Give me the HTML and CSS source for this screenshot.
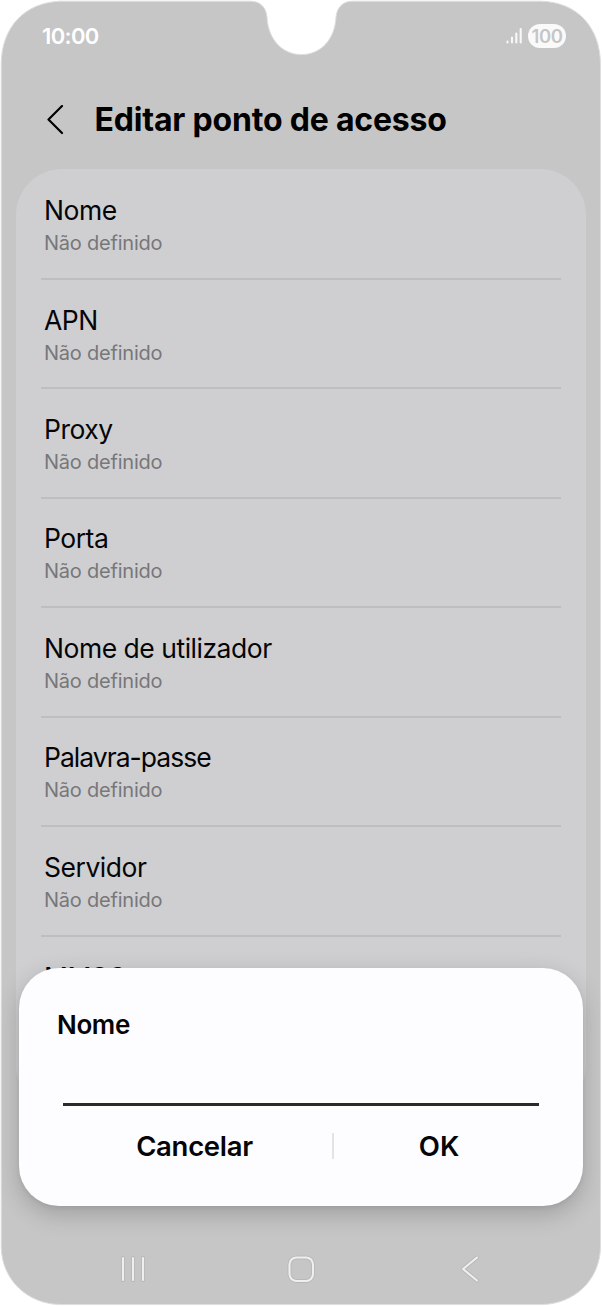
FILE: index.html
```html
<!DOCTYPE html>
<html lang="pt">
<head>
<meta charset="utf-8">
<title>Editar ponto de acesso</title>
<link rel="stylesheet" href="styles.css">
</head>
<body>
<main class="phone">
  <svg class="shell" viewBox="0 0 602 1306" aria-hidden="true">
    <path d="M61 1.2H250C260 1.2 266 7 267 17C268 39 282 54.6 301.500 54.600S335 39 336 17C337 7 343 1.200 353 1.200H541C577 2 600.500 27 600.500 65V1246C600.500 1280 574 1304.500 541 1304.500H61C28 1304.500 1.200 1280 1.200 1246V65C1.200 27 25 2 61 1.200Z"/>
  </svg>
  <header class="status">
    <span class="clock">10:00</span>
    <div class="indicators">
      <svg class="signal" width="18" height="18" viewBox="0 0 18 18" aria-hidden="true"><path d="M2.500 14.500V15.500M7 10.500V15.500M11.300 6.500V15.500M15.700 2V15.500"/></svg>
      <span class="battery">100</span>
    </div>
  </header>
  <div class="titlebar">
    <svg class="back" width="18" height="30" viewBox="0 0 18 30" aria-hidden="true"><path d="M15 1L1.500 14.500L15 28"/></svg>
    <h1 class="title">Editar ponto de acesso</h1>
  </div>
  <section class="list">
    <div class="row"><span class="name">Nome</span><span class="value">Não definido</span></div>
    <div class="row"><span class="name">APN</span><span class="value">Não definido</span></div>
    <div class="row"><span class="name">Proxy</span><span class="value">Não definido</span></div>
    <div class="row"><span class="name">Porta</span><span class="value">Não definido</span></div>
    <div class="row"><span class="name">Nome de utilizador</span><span class="value">Não definido</span></div>
    <div class="row"><span class="name tight">Palavra-passe</span><span class="value">Não definido</span></div>
    <div class="row"><span class="name">Servidor</span><span class="value">Não definido</span></div>
    <div class="row"><span class="name">MMSC</span></div>
  </section>
  <nav class="navbar">
    <svg width="30" height="30" viewBox="0 0 30 30" aria-hidden="true"><path class="halo" d="M5 4V26M15 4V26M25 4V26"/><path d="M5 4V26M15 4V26M25 4V26"/></svg>
    <svg width="30" height="30" viewBox="0 0 30 30" aria-hidden="true"><rect class="halo" x="3.500" y="3.500" width="23.500" height="23.500" rx="7"/><rect x="3.500" y="3.500" width="23.500" height="23.500" rx="7"/></svg>
    <svg width="30" height="30" viewBox="0 0 30 30" aria-hidden="true"><path class="halo" d="M23 3.500L9 15L23 26.500"/><path d="M23 3.500L9 15L23 26.500"/></svg>
  </nav>
  <section class="dialog" role="dialog">
    <h2 class="dialog-title">Nome</h2>
    <div class="field"></div>
    <div class="actions">
      <span class="action cancel">Cancelar</span>
      <span class="separator"></span>
      <span class="action ok">OK</span>
    </div>
  </section>
</main>
</body>
</html>
```
FILE: styles.css
```css
* { box-sizing: border-box; }
body { margin: 0; background: #fff; font-family: Inter, "Liberation Sans", sans-serif; color: #050507; }
h1, h2 { margin: 0; }
svg { display: block; flex: none; fill: none; stroke-linecap: round; stroke-linejoin: round; }
.phone { position: relative; isolation: isolate; width: 602px; height: 1306px; overflow: hidden; display: flex; flex-direction: column; }
.shell { position: absolute; inset: 0; z-index: -1; width: 602px; height: 1306px; }
.shell path { fill: #c6c6c6; stroke: #dedede; stroke-width: 1; }
.status { height: 72px; flex: none; padding: 0 36px 0 42px; display: flex; align-items: center; justify-content: space-between; color: #fff; }
.clock { font-size: 22px; font-weight: 600; line-height: 26px; letter-spacing: -0.65px; }
.indicators { display: flex; align-items: center; gap: 5px; }
.signal path { stroke: #f8f8f8; stroke-width: 2.1; }
.battery { width: 38px; height: 24px; border-radius: 12px; background: #fafafa; color: #c6c6c6; font-size: 18.500px; font-weight: 600; line-height: 24px; letter-spacing: -0.4px; text-align: center; }
.titlebar { height: 97px; flex: none; padding-left: 47px; display: flex; align-items: center; }
.back { margin-bottom: 2px; }
.back path { stroke: #000; stroke-width: 2.2; }
.title { margin: 0 0 1px 29.500px; font-size: 32px; font-weight: 700; line-height: 40px; letter-spacing: -0.19px; color: #000; white-space: nowrap; }
.list { width: 570px; height: 942px; flex: none; margin-left: 16px; padding: 0 25px; border-radius: 46px; background: #cfcfd1; overflow: hidden; }
.row { height: 109.45px; padding: 23.500px 0 0 3px; border-bottom: 2px solid #bebec0; display: flex; flex-direction: column; }
.row:first-child { height: 111px; padding-top: 25px; }
.row:last-child { padding-top: 24.500px; }
.name { font-size: 26.500px; line-height: 32px; letter-spacing: -0.48px; }
.tight { letter-spacing: -0.98px; }
.value { margin-top: 2px; font-size: 20px; line-height: 30px; letter-spacing: -0.22px; color: #77777a; }
.navbar { height: 74px; margin-top: 121px; flex: none; padding: 0 118px; display: flex; justify-content: space-between; align-items: center; }
.navbar svg * { stroke: #efefef; stroke-width: 2.1; }
.navbar svg .halo { stroke: #b8b8b8; stroke-width: 4; }
.dialog { position: absolute; left: 19px; top: 968px; width: 564px; height: 237.5px; padding: 41px 38px 0; border-radius: 40px; background: #fdfdff; box-shadow: 0 8px 24px rgba(0,0,0,.2), 0 2px 4px rgba(0,0,0,.06); display: flex; flex-direction: column; }
.dialog-title { font-size: 26px; font-weight: 600; line-height: 32px; letter-spacing: -0.35px; }
.field { height: 65px; margin: 0 6px; border-bottom: 3px solid #2b2b2d; }
.actions { height: 80px; display: flex; align-items: center; }
.action { font-size: 27.500px; font-weight: 600; line-height: 34px; text-align: center; }
.cancel { width: 275px; letter-spacing: -0.3px; }
.ok { width: 211px; }
.separator { width: 1.500px; height: 26px; margin-bottom: 1px; background: #e3e3e5; }
```
